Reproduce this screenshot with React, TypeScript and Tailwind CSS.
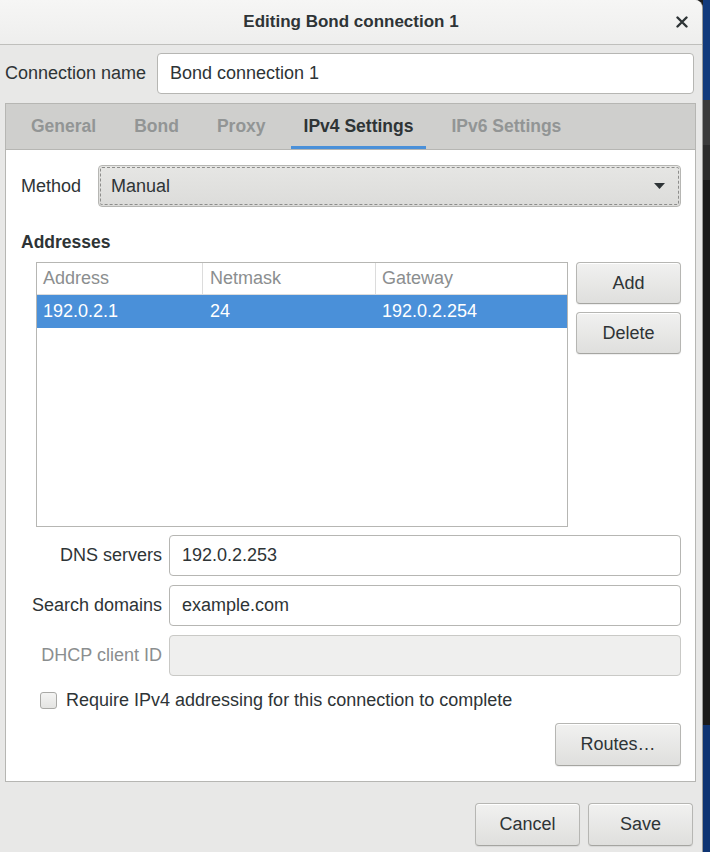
import { useState } from "react";

const font = "font-['Liberation_Sans',Arial,sans-serif]";

const btn =
  "flex items-center justify-center rounded-[4px] border border-[#b6b6b3] border-b-[#a5a5a1] bg-gradient-to-b from-[#f1f1f0] to-[#dfdfdd] text-[18px] text-[#2e3436] shadow-[inset_0_1px_0_#ffffff,0_1px_1px_rgba(0,0,0,0.07)]";

const entryBase =
  "flex h-[41px] items-center rounded-[4px] border px-[12px] text-[18px] text-[#2e3436]";
const entry = `${entryBase} border-[#b6b6b3] bg-white`;

const tabs = ["General", "Bond", "Proxy", "IPv4 Settings", "IPv6 Settings"];

const rows = [{ address: "192.0.2.1", netmask: "24", gateway: "192.0.2.254" }];

function CloseIcon() {
  return (
    <svg width="12" height="12" viewBox="0 0 12 12">
      <path d="M1.5 1.5 L10.5 10.5 M10.5 1.5 L1.5 10.5" stroke="#2e3436" strokeWidth="2.4" strokeLinecap="round" />
    </svg>
  );
}

export default function App() {
  const [active] = useState("IPv4 Settings");

  return (
    <div className={`flex h-[852px] w-[710px] overflow-hidden bg-[#1c1c1c] ${font}`}>
      {/* Dialog */}
      <div className="flex w-[703px] flex-col overflow-hidden rounded-tr-[8px] border-r border-[#9a9a98] bg-[#e8e8e7] text-[#2e3436]">
        {/* Title bar */}
        <div className="grid h-[45px] shrink-0 grid-cols-[1fr_auto_1fr] items-center border-b border-[#bfbfbc] bg-gradient-to-b from-[#f6f6f5] to-[#eeeeed]">
          <div />
          <div className="text-[17px] font-bold">Editing Bond connection 1</div>
          <div className="flex justify-end pr-[14px]">
            <CloseIcon />
          </div>
        </div>

        {/* Connection name */}
        <div className="mt-[8px] flex items-center pr-[8px]">
          <div className="w-[157px] pl-[5px] text-[18px]">Connection name</div>
          <div className={`${entry} h-[40px] flex-1`}>Bond connection 1</div>
        </div>

        {/* Notebook */}
        <div className="mx-[5px] mr-[6px] mt-[9px] flex flex-col border border-[#b6b6b3]">
          <div className="flex h-[46px] items-stretch gap-[12px] border-b border-[#b6b6b3] bg-[#cfcfcd] pl-[12px]">
            {tabs.map((t) => (
              <div
                key={t}
                className={`flex items-center border-b-[3px] px-[13px] pt-[3px] text-[17.5px] font-bold ${
                  t === active ? "border-[#4a90d9] text-[#2e3436]" : "border-transparent text-[#929595]"
                }`}
              >
                {t}
              </div>
            ))}
          </div>

          {/* Page */}
          <div className="flex flex-col bg-white pb-[15px] pl-[15px] pr-[14px] pt-[15px]">
            {/* Method */}
            <div className="flex items-center">
              <div className="w-[77px] text-[18px]">Method</div>
              <div className="flex h-[42px] flex-1 items-center justify-between rounded-[4px] border border-[#b6b6b3] bg-gradient-to-b from-[#e6e6e4] to-[#dcdcda] pl-[12px] pr-[15px] text-[18px] outline-1 outline-dashed outline-[#8d8d8b] outline-offset-[-3px]">
                <span>Manual</span>
                <svg width="11" height="6" viewBox="0 0 11 6">
                  <path d="M0 0 L11 0 L5.5 6 Z" fill="#2e3436" />
                </svg>
              </div>
            </div>

            {/* Addresses */}
            <div className="mt-[22px] text-[17.5px] font-bold">Addresses</div>

            <div className="ml-[15px] mt-[7px] flex gap-[8px]">
              <div className="h-[265px] flex-1 border border-[#b6b6b3] bg-white">
                <div className="grid h-[32px] grid-cols-[166px_173px_1fr] border-b border-[#dcdcdc] text-[18px] text-[#8b8e8f]">
                  <div className="flex items-center border-r border-[#dcdcdc] pl-[6px]">Address</div>
                  <div className="flex items-center border-r border-[#dcdcdc] pl-[7px]">Netmask</div>
                  <div className="flex items-center pl-[6px]">Gateway</div>
                </div>
                {rows.map((r) => (
                  <div key={r.address} className="grid h-[33px] grid-cols-[166px_173px_1fr] bg-[#4a90d9] text-[18px] text-white">
                    <div className="flex items-center pl-[6px]">{r.address}</div>
                    <div className="flex items-center pl-[7px]">{r.netmask}</div>
                    <div className="flex items-center pl-[6px]">{r.gateway}</div>
                  </div>
                ))}
              </div>
              <div className="flex w-[105px] flex-col gap-[8px]">
                <div className={`${btn} h-[42px]`}>Add</div>
                <div className={`${btn} h-[42px]`}>Delete</div>
              </div>
            </div>

            {/* DNS etc */}
            <div className="mt-[8px] grid grid-cols-[141px_1fr] items-center gap-x-[7px] gap-y-[9px]">
              <div className="text-right text-[18px]">DNS servers</div>
              <div className={entry}>192.0.2.253</div>
              <div className="text-right text-[18px]">Search domains</div>
              <div className={entry}>example.com</div>
              <div className="text-right text-[18px] text-[#8b8e8f]">DHCP client ID</div>
              <div className={`${entryBase} border-[#c9c9c6] bg-[#efefee]`} />
            </div>

            <div className="ml-[19px] mt-[11px] flex items-center gap-[9px]">
              <div className="h-[17px] w-[17px] rounded-[3px] border border-[#a9a9a6] bg-gradient-to-b from-[#f4f4f3] to-[#e4e4e2]" />
              <span className="text-[18px]">Require IPv4 addressing for this connection to complete</span>
            </div>

            <div className="mt-[9px] flex justify-end">
              <div className={`${btn} h-[43px] w-[126px]`}>Routes…</div>
            </div>
          </div>
        </div>

        {/* Bottom buttons */}
        <div className="mt-auto flex justify-end gap-[8px] pb-[6px] pr-[9px]">
          <div className={`${btn} h-[43px] w-[105px]`}>Cancel</div>
          <div className={`${btn} h-[43px] w-[105px]`}>Save</div>
        </div>
      </div>

      {/* Desktop behind */}
      <div className="flex flex-1 flex-col">
        <div className="h-[100px] bg-[#113a7c]" />
        <div className="h-[45px] bg-[#3b3b3b]" />
        <div className="h-[35px] bg-[#2c2c2c]" />
        <div className="flex-1 bg-[#1a1a1a]" />
        <div className="h-[127px] bg-[#0e3473]" />
      </div>
    </div>
  );
}
